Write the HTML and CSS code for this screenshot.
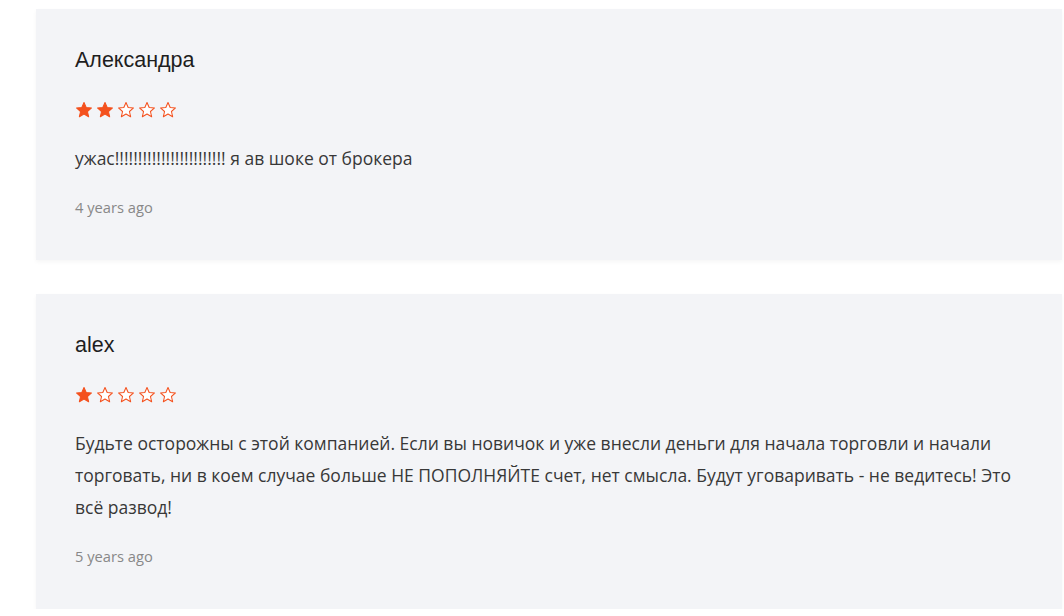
FILE: index.html
```html
<!DOCTYPE html>
<html lang="ru">
<head>
  <meta charset="UTF-8" />
  <meta name="viewport" content="width=device-width, initial-scale=1.0" />
  <title>Отзывы</title>
  <link rel="stylesheet" href="styles.css">
</head>
<body>
  <div class="reviews">
    <div class="review">
      <div class="review-name">Александра</div>
      <div class="stars">
        <svg class="star full" viewBox="0 0 24 24"><polygon points="12,2 14.9,8.6 22,9.3 16.6,14 18.2,21 12,17.3 5.8,21 7.4,14 2,9.3 9.1,8.6"/></svg>
        <svg class="star full" viewBox="0 0 24 24"><polygon points="12,2 14.9,8.6 22,9.3 16.6,14 18.2,21 12,17.3 5.8,21 7.4,14 2,9.3 9.1,8.6"/></svg>
        <svg class="star" viewBox="0 0 24 24"><polygon points="12,2 14.9,8.6 22,9.3 16.6,14 18.2,21 12,17.3 5.8,21 7.4,14 2,9.3 9.1,8.6"/></svg>
        <svg class="star" viewBox="0 0 24 24"><polygon points="12,2 14.9,8.6 22,9.3 16.6,14 18.2,21 12,17.3 5.8,21 7.4,14 2,9.3 9.1,8.6"/></svg>
        <svg class="star" viewBox="0 0 24 24"><polygon points="12,2 14.9,8.6 22,9.3 16.6,14 18.2,21 12,17.3 5.8,21 7.4,14 2,9.3 9.1,8.6"/></svg>
      </div>
      <p class="review-text">ужас!!!!!!!!!!!!!!!!!!!!!!!! я ав шоке от брокера</p>
      <div class="review-date">4 years ago</div>
    </div>

    <div class="review">
      <div class="review-name">alex</div>
      <div class="stars">
        <svg class="star full" viewBox="0 0 24 24"><polygon points="12,2 14.9,8.6 22,9.3 16.6,14 18.2,21 12,17.3 5.8,21 7.4,14 2,9.3 9.1,8.6"/></svg>
        <svg class="star" viewBox="0 0 24 24"><polygon points="12,2 14.9,8.6 22,9.3 16.6,14 18.2,21 12,17.3 5.8,21 7.4,14 2,9.3 9.1,8.6"/></svg>
        <svg class="star" viewBox="0 0 24 24"><polygon points="12,2 14.9,8.6 22,9.3 16.6,14 18.2,21 12,17.3 5.8,21 7.4,14 2,9.3 9.1,8.6"/></svg>
        <svg class="star" viewBox="0 0 24 24"><polygon points="12,2 14.9,8.6 22,9.3 16.6,14 18.2,21 12,17.3 5.8,21 7.4,14 2,9.3 9.1,8.6"/></svg>
        <svg class="star" viewBox="0 0 24 24"><polygon points="12,2 14.9,8.6 22,9.3 16.6,14 18.2,21 12,17.3 5.8,21 7.4,14 2,9.3 9.1,8.6"/></svg>
      </div>
      <p class="review-text">Будьте осторожны с этой компанией. Если вы новичок и уже внесли деньги для начала торговли и начали торговать, ни в коем случае больше НЕ ПОПОЛНЯЙТЕ счет, нет смысла. Будут уговаривать - не ведитесь! Это всё развод!</p>
      <div class="review-date">5 years ago</div>
    </div>
  </div>
</body>
</html>
```

FILE: styles.css
```css
body { margin: 0; background: #fff; font-family: "Open Sans", sans-serif; color: #333; }
.reviews { padding: 9px 2px 0 36px; display: flex; flex-direction: column; gap: 34px; }
.review { background: #f3f4f7; padding: 37px 39px 41px; box-shadow: 0 2px 4px rgba(0, 0, 0, 0.04); }
.review-name { font-family: "Liberation Sans", Arial, sans-serif; font-size: 21.5px; line-height: 28px; color: #1e1e1e; margin-bottom: 26px; }
.stars { display: flex; gap: 3px; height: 20px; align-items: center; margin-bottom: 22px; }
.star { width: 18px; height: 18px; fill: #fff; stroke: #f4511e; stroke-width: 1.4; stroke-linejoin: round; }
.star.full { fill: #f4511e; }
.review-text { margin: 0 0 21px; font-size: 17.5px; line-height: 32px; color: #383838; }
.review-date { font-size: 14.7px; line-height: 24px; color: #888; }
```
